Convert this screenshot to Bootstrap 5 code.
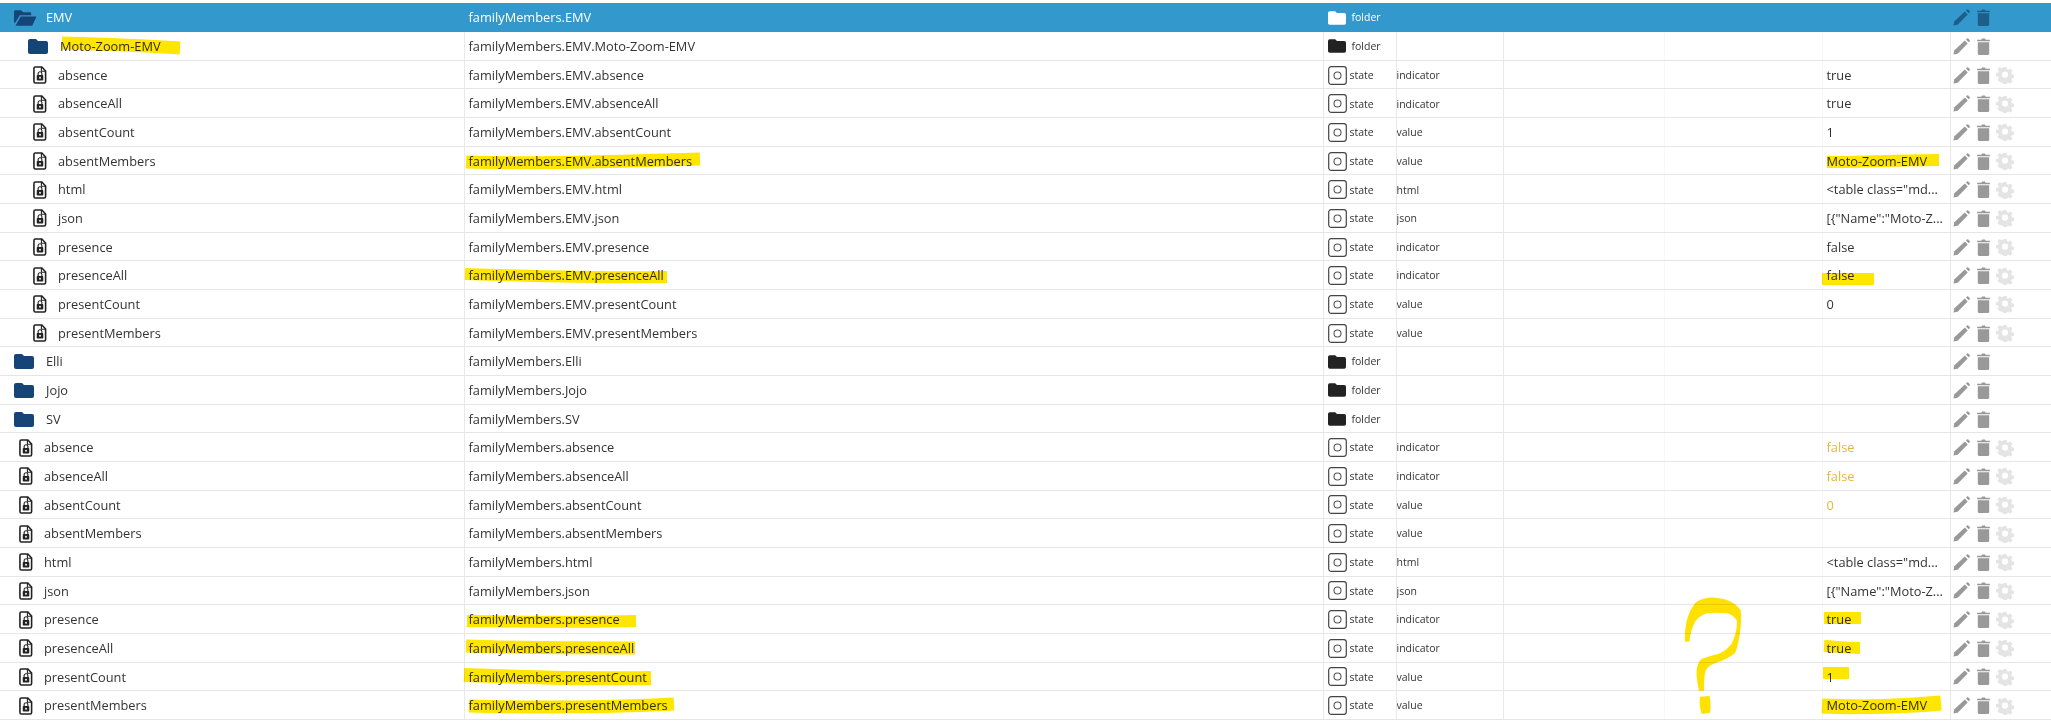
<!DOCTYPE html>
<html lang="en"><head><meta charset="utf-8">
<link rel="stylesheet" href="https://cdn.jsdelivr.net/npm/bootstrap@5.3.0/dist/css/bootstrap.min.css">
<style>
html,body{margin:0;background:#fff;overflow:hidden;height:726px}
.obj-wrap{position:relative;width:2051px;height:726px;padding-top:3px}
.obj-table{table-layout:fixed;width:2051px;margin:0;font:12.8px/1 "Open Sans","Noto Sans",sans-serif;color:#333;border-collapse:collapse}
.obj-table td{height:28.67px;padding:1px 0 0 4px;border:0;border-bottom:1px solid #e6e6e6;border-right:1px solid #e9e9e9;white-space:nowrap;overflow:hidden;vertical-align:middle;background:transparent;color:#333;box-shadow:none}
.obj-table td:last-child{border-right:0;padding-left:1px}
.obj-table td.soft{border-right-color:#f7f7f7}
.obj-table td.role-cell{padding-left:0}
.obj-table tr.sel td{background:#3399cc;color:#fff;border-color:#3399cc}
.obj-table td.val-dim{color:#e8b53a}
.cell-name{display:flex;align-items:center;height:100%}
.pad-open{padding-left:10px}.pad-sub{padding-left:24px}.pad-top{padding-left:10px}.pad-s1{padding-left:29px}.pad-s0{padding-left:15px}
.ic-folder{width:20px;height:15px;margin-right:12px;fill:#164477;flex:none}
.pad-sub .ic-folder{margin-right:12px}
.pad-open .ic-folder{width:23px;height:16px;margin-right:9px}
.ic-file{width:14px;height:18px;margin-right:11px;flex:none}
.tysm{font-size:10.5px}
.t-cell{display:flex;align-items:center}
.ic-state{width:19px;height:19px;margin:0 3px 0 0;flex:none}
.ic-tf{width:18px;height:14px;margin:0 6px 0 0;flex:none}
.acts{display:flex;align-items:center;gap:3px;padding-left:0}
.acts svg{width:19px;height:19px;fill:#999;flex:none}
.acts svg.gear{fill:#e4e4e4;width:18px;height:18px}
.obj-table tr.sel td .acts svg{fill:#1d5f8a}
.marks{position:absolute;left:0;top:0;width:2051px;height:726px;pointer-events:none;mix-blend-mode:multiply}
.marks path{fill:none;stroke:#ffe600;stroke-linecap:butt;stroke-linejoin:round}
.marks path.blob{fill:#ffe100;stroke:none}
</style></head><body>
<svg width="0" height="0" class="d-block position-absolute"><defs>
<symbol id="f-closed" viewBox="0 0 20 15"><path d="M2 0h6l2 2h8a2 2 0 0 1 2 2v9a2 2 0 0 1-2 2H2a2 2 0 0 1-2-2V2a2 2 0 0 1 2-2z"/></symbol>
<symbol id="f-open" viewBox="0 0 24 16"><path d="M1.500 0h6l2 2h7a1.500 1.500 0 0 1 1.500 1.500V5H6L1.200 13H0V1.500A1.500 1.500 0 0 1 1.500 0z"/><path d="M7 6.500h16.500L19 16H1.500z"/></symbol>
<symbol id="f-file" viewBox="0 0 15 19"><path d="M2.500 1h7l4 4.200V16.500a1.500 1.500 0 0 1-1.500 1.500H2.500A1.500 1.500 0 0 1 1 16.500v-14A1.500 1.500 0 0 1 2.500 1z" fill="#fff" stroke="#222" stroke-width="1.700"/><path d="M9 1v4.500h4.500" fill="none" stroke="#222" stroke-width="1.200"/><rect x="4" y="9.500" width="7" height="6" rx=".8" fill="#222"/><path d="M5.500 9.500V8a2 2 0 0 1 4 0v1.500" fill="none" stroke="#222" stroke-width="1.200"/><circle cx="7.500" cy="12.500" r="1" fill="#fff"/></symbol>
<symbol id="i-state" viewBox="0 0 19 19"><rect x=".7" y=".7" width="17.600" height="17.600" rx="2.500" fill="#fff" stroke="#444" stroke-width="1.200"/><circle cx="9.500" cy="9.500" r="3.500" fill="none" stroke="#555" stroke-width="1.100"/></symbol>
<symbol id="i-pen" viewBox="0 0 20 20"><path d="M13.500 3.800l3 3L6 17.500l-4.500 1 1-4.500z"/><path d="M14.700 2.600l1-1a1 1 0 0 1 1.400 0l1.500 1.500a1 1 0 0 1 0 1.400l-1 1z"/></symbol>
<symbol id="i-trash" viewBox="0 0 20 20"><path d="M4 5.500h12v12a1.500 1.500 0 0 1-1.500 1.500h-9A1.500 1.500 0 0 1 4 17.500z"/><path d="M3.300 3h4.400L8.500 1.700h3l.8 1.300h4.400v1.500H3.300z"/></symbol>
<symbol id="i-gear" viewBox="0 0 20 20"><path fill-rule="evenodd" d="M8.300 1h3.400l.5 2.600 1.500.7 2.300-1.400 2.400 2.400-1.500 2.200.7 1.600 2.400.5v3.400l-2.500.5-.6 1.500 1.400 2.300-2.400 2.300-2.200-1.400-1.500.6-.5 2.600H8.300l-.5-2.600-1.500-.6L4 17.900l-2.400-2.300 1.500-2.300-.6-1.500L0 11.300V7.900l2.500-.5.600-1.600L1.600 3.500 4 1.100l2.300 1.400 1.500-.6zM10 6.200a3.400 3.400 0 1 0 0 6.800 3.400 3.400 0 0 0 0-6.800z"/></symbol>
</defs></svg>
<div class="obj-wrap">
<table class="table obj-table"><colgroup><col style="width:464px"><col style="width:859px"><col style="width:73px"><col style="width:107px"><col style="width:161px"><col style="width:158px"><col style="width:128px"><col style="width:101px"></colgroup>
<tbody id="rows"></tbody></table>
<svg class="marks" viewBox="0 0 2051 726">
<path stroke-width="13" d="M62 43 C100 44 150 46 180 48"/>
<path stroke-width="13" d="M466 162 C530 164 640 161 700 159"/>
<path stroke-width="12" d="M465 274 C530 276 610 278 667 277"/>
<path stroke-width="12" d="M1822 279 L1874 279"/>
<path stroke-width="12" d="M1827 162 C1860 162 1910 160 1939 160"/>
<path stroke-width="12" d="M467 621 C520 622 590 622 636 621"/>
<path stroke-width="13" d="M466 646 C520 648 590 648 635 648"/>
<path stroke-width="14" d="M464 675 C520 677 600 679 651 678"/>
<path stroke-width="13" d="M469 706 C530 708 620 707 674 704"/>
<path stroke-width="12" d="M1824 618 L1861 618"/>
<path stroke-width="12" d="M1824 646 C1840 647 1850 648 1860 648"/>
<path stroke-width="12" d="M1823 673 L1849 673"/>
<path stroke-width="15" d="M1822 706 C1860 708 1910 706 1941 703"/>
<g transform="translate(1600 560) scale(.3333)">
<path class="blob" d="M255 245 C253 200 262 160 285 130 C300 115 330 112 345 113 C375 115 405 125 422 150 C425 180 422 200 420 220 C415 250 410 270 405 280 C385 295 360 305 345 310 C330 315 318 325 315 340 C312 355 312 375 312 392 L297 392 C293 370 288 350 290 330 C293 310 300 298 310 295 C330 288 345 285 360 280 C380 270 395 255 400 240 C410 215 412 195 410 180 C400 168 392 162 380 160 C360 158 340 158 320 160 C305 165 295 172 285 185 C275 205 270 225 268 245 Z"/>
<path class="blob" d="M300 410 L328 408 C332 420 333 440 330 458 L305 462 C300 445 297 425 300 410 Z"/>
</g>
</svg>
</div>
<script>
const rows=[["o","EMV","familyMembers.EMV","folder","","",1],["f1","Moto-Zoom-EMV","familyMembers.EMV.Moto-Zoom-EMV","folder","",""]];
const kids=[["absence","indicator","true","false"],["absenceAll","indicator","true","false"],["absentCount","value","1","0"],["absentMembers","value","Moto-Zoom-EMV",""],["html","html",'<table class="md...','<table class="md...'],["json","json",'[{"Name":"Moto-Z...','[{"Name":"Moto-Z...'],["presence","indicator","false","true"],["presenceAll","indicator","false","true"],["presentCount","value","0","1"],["presentMembers","value","","Moto-Zoom-EMV"]];
kids.forEach(k=>rows.push(["s1",k[0],"familyMembers.EMV."+k[0],"state",k[1],k[2]]));
["Elli","Jojo","SV"].forEach(n=>rows.push(["f0",n,"familyMembers."+n,"folder","",""]));
kids.forEach((k,i)=>rows.push(["s0",k[0],"familyMembers."+k[0],"state",k[1],k[3],0,i<3]));
const esc=s=>s.replace(/&/g,"&amp;").replace(/</g,"&lt;");
const use=(c,id)=>`<svg class="${c}"><use href="#${id}"/></svg>`;
document.getElementById("rows").innerHTML=rows.map(r=>{
 const [t,n,p,ty,role,val,sel,dim]=r;const isF=ty==="folder";
 const ic=t==="o"?use("ic-folder","f-open"):isF?use("ic-folder","f-closed"):use("ic-file","f-file");
 const pad={o:"pad-open",f1:"pad-sub",f0:"pad-top",s1:"pad-s1",s0:"pad-s0"}[t];
 const tyic=isF?`<svg class="ic-tf" style="fill:${sel?"#fff":"#222"}"><use href="#f-closed"/></svg>`:use("ic-state","i-state");
 return `<tr class="${sel?"sel":""}"><td><div class="cell-name ${pad}">${ic}<span>${n}</span></div></td><td>${esc(p)}</td><td><div class="t-cell tysm">${tyic}<span>${ty}</span></div></td><td class="tysm role-cell">${role}</td><td class="soft"></td><td class="soft"></td><td class="${dim?"val-dim":""}">${esc(val)}</td><td><div class="acts">${use("","i-pen")}${use("","i-trash")}${isF?"":use("gear","i-gear")}</div></td></tr>`;
}).join("");
</script>
<script src="https://cdn.jsdelivr.net/npm/bootstrap@5.3.0/dist/js/bootstrap.bundle.min.js"></script>
</body></html>
